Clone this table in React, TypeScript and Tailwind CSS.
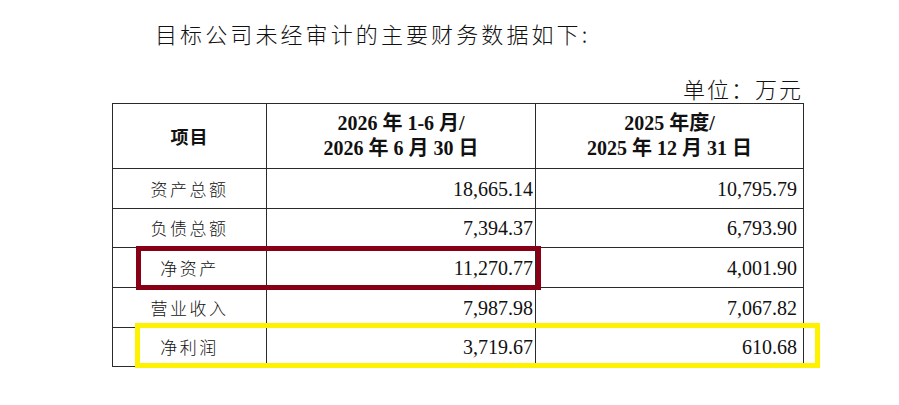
const cjk = "font-['Liberation_Serif','Noto_Sans_CJK_SC',serif]";

const rows = [
  { label: "资产总额", a: "18,665.14", b: "10,795.79", h: "h-[40px]" },
  { label: "负债总额", a: "7,394.37", b: "6,793.90", h: "h-[39px]" },
  { label: "净资产", a: "11,270.77", b: "4,001.90", h: "h-[40px]" },
  { label: "营业收入", a: "7,987.98", b: "7,067.82", h: "h-[40px]" },
  { label: "净利润", a: "3,719.67", b: "610.68", h: "h-[39px]" },
];

export default function App() {
  return (
    <div className={`h-[405px] w-[899px] overflow-hidden bg-white text-[#111] ${cjk}`}>
      <p className="pl-[155px] pt-[18px] text-[22px] leading-[30px] tracking-[3.1px] font-['Noto_Sans_CJK_SC',sans-serif] font-light">
        目标公司未经审计的主要财务数据如下:
      </p>

      <div className="ml-[112px] mt-[26px] w-[691px] text-right font-['Noto_Sans_CJK_SC',sans-serif] text-[22px] font-light leading-[28px] tracking-[2px]">
        单位：万元
      </div>

      <div className="relative ml-[112px] mt-[1px] w-[691px]">
        <table className="w-full table-fixed border-collapse border border-[#2a2a2a]">
          <colgroup>
            <col className="w-[154px]" />
            <col className="w-[269px]" />
            <col className="w-[268px]" />
          </colgroup>
          <thead>
            <tr className="h-[65px]">
              <th className="border border-[#2a2a2a] font-['Noto_Sans_CJK_SC',sans-serif] text-[18px] font-bold tracking-[1px]">
                项目
              </th>
              <th className="border border-[#2a2a2a] text-[20px] font-bold leading-[25px]">
                2026 年 1-6 月/
                <br />
                2026 年 6 月 30 日
              </th>
              <th className="border border-[#2a2a2a] text-[20px] font-bold leading-[25px]">
                2025 年度/
                <br />
                2025 年 12 月 31 日
              </th>
            </tr>
          </thead>
          <tbody>
            {rows.map((r) => (
              <tr key={r.label} className={r.h}>
                <td className="border border-[#2a2a2a] text-center font-['Noto_Sans_CJK_SC',sans-serif] text-[17px] font-light tracking-[2.5px]">
                  {r.label}
                </td>
                <td className="border border-[#2a2a2a] pr-[2px] text-right text-[20px]">{r.a}</td>
                <td className="border border-[#2a2a2a] pr-[6px] text-right text-[20px]">{r.b}</td>
              </tr>
            ))}
          </tbody>
        </table>

        {/* annotation boxes drawn over the table */}
        <div className="pointer-events-none absolute left-[24px] top-[143px] h-[44px] w-[405px] border-[5px] border-[#870016]" />
        <div className="pointer-events-none absolute left-[23px] top-[220px] h-[45px] w-[685px] border-[5px] border-[#fff200]" />
      </div>
    </div>
  );
}
